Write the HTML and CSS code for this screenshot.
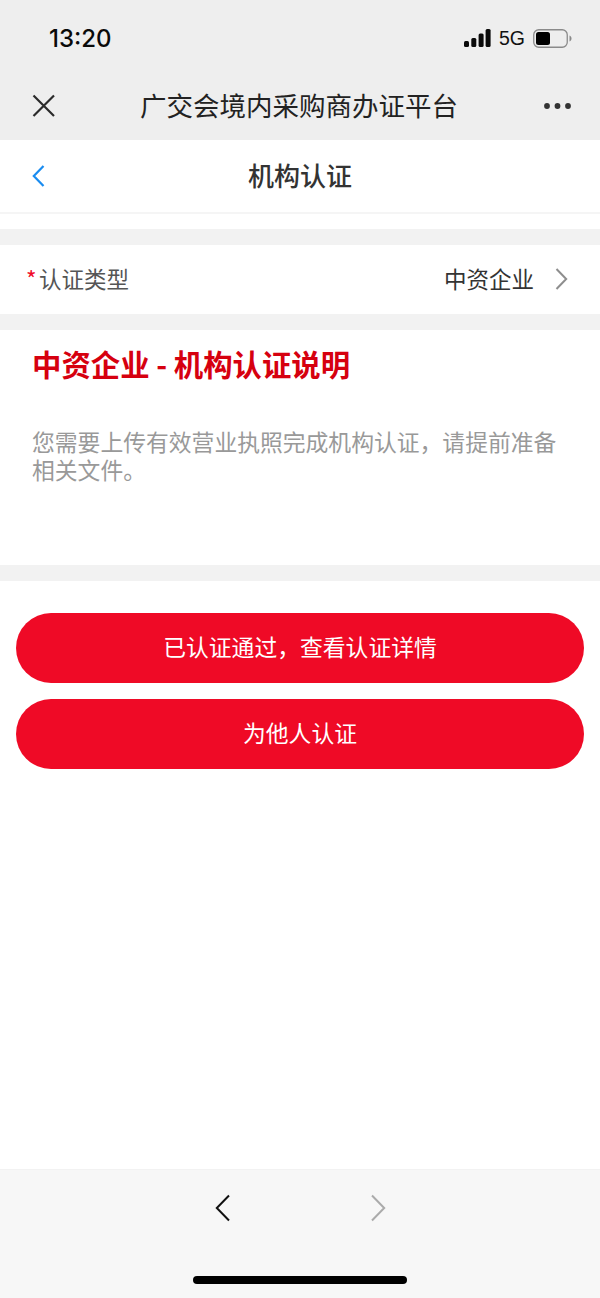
FILE: index.html
```html
<!DOCTYPE html>
<html lang="zh-CN">
<head>
  <meta charset="UTF-8" />
  <meta name="viewport" content="width=device-width, initial-scale=1.0" />
  <title>机构认证</title>
  <link rel="stylesheet" href="styles.css">
</head>
<body>
  <div class="app">
    <header class="top-bar">
      <div class="status-bar">
        <span class="clock">13:20</span>
        <div class="status-icons">
          <svg class="signal" width="27" height="18" viewBox="0 0 27 18">
            <rect x="0" y="12" width="5" height="6" rx="1.5" />
            <rect x="7.3" y="9" width="5" height="9" rx="1.5" />
            <rect x="14.6" y="4.5" width="5" height="13.5" rx="1.5" />
            <rect x="21.6" y="0" width="5" height="18" rx="1.5" />
          </svg>
          <span class="network">5G</span>
          <svg class="battery" width="39" height="19" viewBox="0 0 39 19">
            <rect x="0.75" y="0.75" width="33.5" height="17.5" rx="5" fill="none" stroke="#8a8a8a" stroke-width="1.3" />
            <rect x="3" y="3" width="14" height="13" rx="2.5" fill="#000" />
            <path d="M36.5 6.5c1.3.5 2 1.6 2 3s-.7 2.5-2 3z" fill="#8a8a8a" />
          </svg>
        </div>
      </div>
      <nav class="nav-bar">
        <svg class="nav-close" width="26" height="26" viewBox="0 0 26 26">
          <path d="M2.5 2.5l20.5 20.5M23 2.5L2.5 23" fill="none" stroke="#2a2a2a" stroke-width="2.2" />
        </svg>
        <span class="nav-title">广交会境内采购商办证平台</span>
        <svg class="nav-more" width="28" height="8" viewBox="0 0 28 8">
          <circle cx="4" cy="4" r="2.9" />
          <circle cx="14.5" cy="4" r="2.9" />
          <circle cx="25" cy="4" r="2.9" />
        </svg>
      </nav>
    </header>

    <div class="page-head">
      <svg class="page-back" width="14" height="24" viewBox="0 0 14 24">
        <path d="M11.5 2L1.8 12l9.7 10" fill="none" stroke="#1a8cf0" stroke-width="2.2" />
      </svg>
      <h1 class="page-title">机构认证</h1>
    </div>

    <main class="content">
      <div class="spacer"></div>

      <div class="field-row">
        <span class="field-label"><i class="required">*</i>认证类型</span>
        <span class="field-value">
          中资企业
          <svg width="14" height="24" viewBox="0 0 14 24">
            <path d="M2.5 2l9.7 10-9.7 10" fill="none" stroke="#8e8e8e" stroke-width="2" />
          </svg>
        </span>
      </div>

      <section class="notice">
        <h2 class="notice-title">中资企业 - 机构认证说明</h2>
        <p class="notice-text">您需要上传有效营业执照完成机构认证，请提前准备相关文件。</p>
      </section>

      <div class="actions">
        <button class="btn" type="button">已认证通过，查看认证详情</button>
        <button class="btn" type="button">为他人认证</button>
      </div>
    </main>

    <footer class="bottom-bar">
      <div class="bottom-nav">
        <svg width="16" height="28" viewBox="0 0 16 28">
          <path d="M14 1.5L1.8 14 14 26.5" fill="none" stroke="#111" stroke-width="2" />
        </svg>
        <svg width="16" height="28" viewBox="0 0 16 28">
          <path d="M2 1.5L14.2 14 2 26.5" fill="none" stroke="#ababab" stroke-width="2" />
        </svg>
      </div>
      <div class="home-indicator"></div>
    </footer>
  </div>
</body>
</html>
```

FILE: styles.css
```css
html, body {
  margin: 0;
  padding: 0;
  height: 100%;
}
body {
  background-color: #ffffff;
  color: #222222;
  font-family: "Noto Sans CJK SC", "Liberation Sans", sans-serif;
}
.app {
  display: flex;
  flex-direction: column;
  height: 1298px;
  overflow: hidden;
}
.top-bar {
  height: 140px;
  flex: none;
  background-color: #eeeeee;
}
.status-bar {
  display: flex;
  justify-content: space-between;
  align-items: center;
  height: 76px;
  padding: 0 28px 0 49px;
}
.clock {
  font-family: Inter, "Liberation Sans", sans-serif;
  font-size: 24px;
  font-weight: 500;
  color: #0a0a0a;
}
.status-icons {
  display: flex;
  align-items: center;
  gap: 8px;
}
.signal {
  fill: #0a0a0a;
}
.network {
  font-family: "Liberation Sans", sans-serif;
  font-size: 19.5px;
  color: #111111;
}
.nav-bar {
  display: flex;
  justify-content: space-between;
  align-items: center;
  height: 60px;
  padding: 0 29px 0 31px;
}
.nav-title {
  margin: 0 0 0 -2px;
  padding-bottom: 4px;
  font-size: 26.5px;
  color: #222222;
}
.nav-more {
  fill: #333333;
}
.page-head {
  display: flex;
  align-items: center;
  justify-content: center;
  position: relative;
  height: 72px;
  flex: none;
  border-bottom: 2px solid #f5f5f5;
}
.page-back {
  position: absolute;
  left: 32px;
  top: 24px;
}
.page-title {
  margin: 0;
  padding-bottom: 4px;
  font-size: 26px;
  font-weight: 500;
  color: #333333;
}
.content {
  flex: 1;
}
.spacer {
  height: 15px;
  border-bottom: 16px solid #f2f2f2;
}
.field-row {
  display: flex;
  justify-content: space-between;
  align-items: center;
  height: 69px;
  padding: 0 32px 0 26px;
  border-bottom: 16px solid #f2f2f2;
  font-size: 22.5px;
}
.field-label {
  display: flex;
  align-items: center;
  padding-bottom: 4px;
  color: #555555;
}
.required {
  width: 13px;
  font-style: normal;
  color: #f00a28;
}
.field-value {
  display: flex;
  align-items: center;
  gap: 20px;
  padding-bottom: 4px;
  color: #333333;
}
.field-value svg {
  margin-top: 2px;
}
.notice {
  height: 235px;
  box-sizing: border-box;
  padding: 14px 40px 0 32px;
}
.notice-title {
  margin: 0;
  font-size: 29.4px;
  line-height: 38px;
  font-weight: 700;
  color: #d6000f;
}
.notice-text {
  margin: 46px 0 0;
  font-size: 22.8px;
  line-height: 28px;
  color: #999999;
}
.actions {
  display: flex;
  flex-direction: column;
  gap: 16px;
  padding: 32px 16px 0;
  border-top: 16px solid #f2f2f2;
}
.btn {
  height: 70px;
  padding: 0 0 4px;
  border: none;
  border-radius: 35px;
  background-color: #ef0a26;
  color: #ffffff;
  font-family: inherit;
  font-size: 22.8px;
}
.bottom-bar {
  height: 129px;
  flex: none;
  background-color: #f7f7f7;
  border-top: 1px solid #f2f2f2;
  box-sizing: border-box;
  display: flex;
  flex-direction: column;
  align-items: center;
}
.bottom-nav {
  display: flex;
  gap: 139px;
  margin-top: 24px;
}
.home-indicator {
  width: 214px;
  height: 8px;
  margin-top: 54px;
  border-radius: 4px;
  background-color: #000000;
}
```
